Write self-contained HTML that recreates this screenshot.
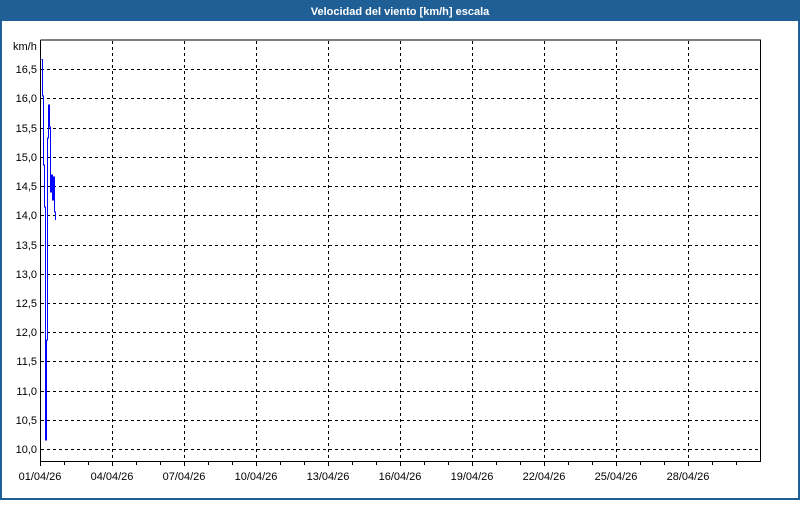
<!DOCTYPE html>
<html><head><meta charset="utf-8"><style>
body{margin:0;width:800px;height:500px;overflow:hidden;background:#fff;font-family:"Liberation Sans",sans-serif}
</style></head><body>
<svg width="800" height="500" xmlns="http://www.w3.org/2000/svg" font-family="Liberation Sans, sans-serif" font-size="11">
<rect x="0" y="0" width="800" height="500" fill="#1f5f96"/>
<rect x="2" y="21" width="796" height="477" fill="#fff"/>
<text x="400" y="15" fill="#fff" font-weight="bold" font-size="11" text-anchor="middle">Velocidad del viento [km/h] escala</text>
<g stroke="#000" stroke-width="1" stroke-dasharray="3,3" fill="none">
<path d="M41 69.5H760M41 98.5H760M41 128.5H760M41 157.5H760M41 186.5H760M41 215.5H760M41 245.5H760M41 274.5H760M41 303.5H760M41 332.5H760M41 361.5H760M41 391.5H760M41 420.5H760M41 449.5H760"/>
<path d="M112.5 41V461M184.5 41V461M256.5 41V461M328.5 41V461M400.5 41V461M472.5 41V461M544.5 41V461M616.5 41V461M688.5 41V461"/>
</g>
<path d="M40.5 40V461.5H760.5V40H40.5" stroke="#000" fill="none"/>
<g stroke="#000"><path d="M40.5 461V466M64.5 461V465M88.5 461V465M112.5 461V466M136.5 461V465M160.5 461V465M184.5 461V466M208.5 461V465M232.5 461V465M256.5 461V466M280.5 461V465M304.5 461V465M328.5 461V466M352.5 461V465M376.5 461V465M400.5 461V466M424.5 461V465M448.5 461V465M472.5 461V466M496.5 461V465M520.5 461V465M544.5 461V466M568.5 461V465M592.5 461V465M616.5 461V466M640.5 461V465M664.5 461V465M688.5 461V466M712.5 461V465M736.5 461V465"/></g>
<polyline fill="none" stroke="#0000ff" stroke-width="1" points="41.5,59.5 42.5,59.5 42.5,96 43.5,96 43.5,165 44.5,165 44.5,207 45.5,207 45.5,440 46.5,440 46.5,340 47.5,340 47.5,138 48.5,138 48.5,105 49.5,105 49.5,127 50.5,127 50.5,192 51.5,192 51.5,175 52.5,175 52.5,200 53.5,200 53.5,177 54.5,177 54.5,212 55.5,212 55.5,220"/>
<g fill="#000" text-anchor="end">
<text x="37" y="73">16,5</text><text x="37" y="102">16,0</text><text x="37" y="132">15,5</text><text x="37" y="161">15,0</text><text x="37" y="190">14,5</text><text x="37" y="219">14,0</text><text x="37" y="249">13,5</text><text x="37" y="278">13,0</text><text x="37" y="307">12,5</text><text x="37" y="336">12,0</text><text x="37" y="365">11,5</text><text x="37" y="395">11,0</text><text x="37" y="424">10,5</text><text x="37" y="453">10,0</text>
</g>
<text x="13" y="50" fill="#000">km/h</text>
<g fill="#000" text-anchor="middle">
<text x="40" y="480">01/04/26</text><text x="112" y="480">04/04/26</text><text x="184" y="480">07/04/26</text><text x="256" y="480">10/04/26</text><text x="328" y="480">13/04/26</text><text x="400" y="480">16/04/26</text><text x="472" y="480">19/04/26</text><text x="544" y="480">22/04/26</text><text x="616" y="480">25/04/26</text><text x="688" y="480">28/04/26</text>
</g>
</svg>
</body></html>
